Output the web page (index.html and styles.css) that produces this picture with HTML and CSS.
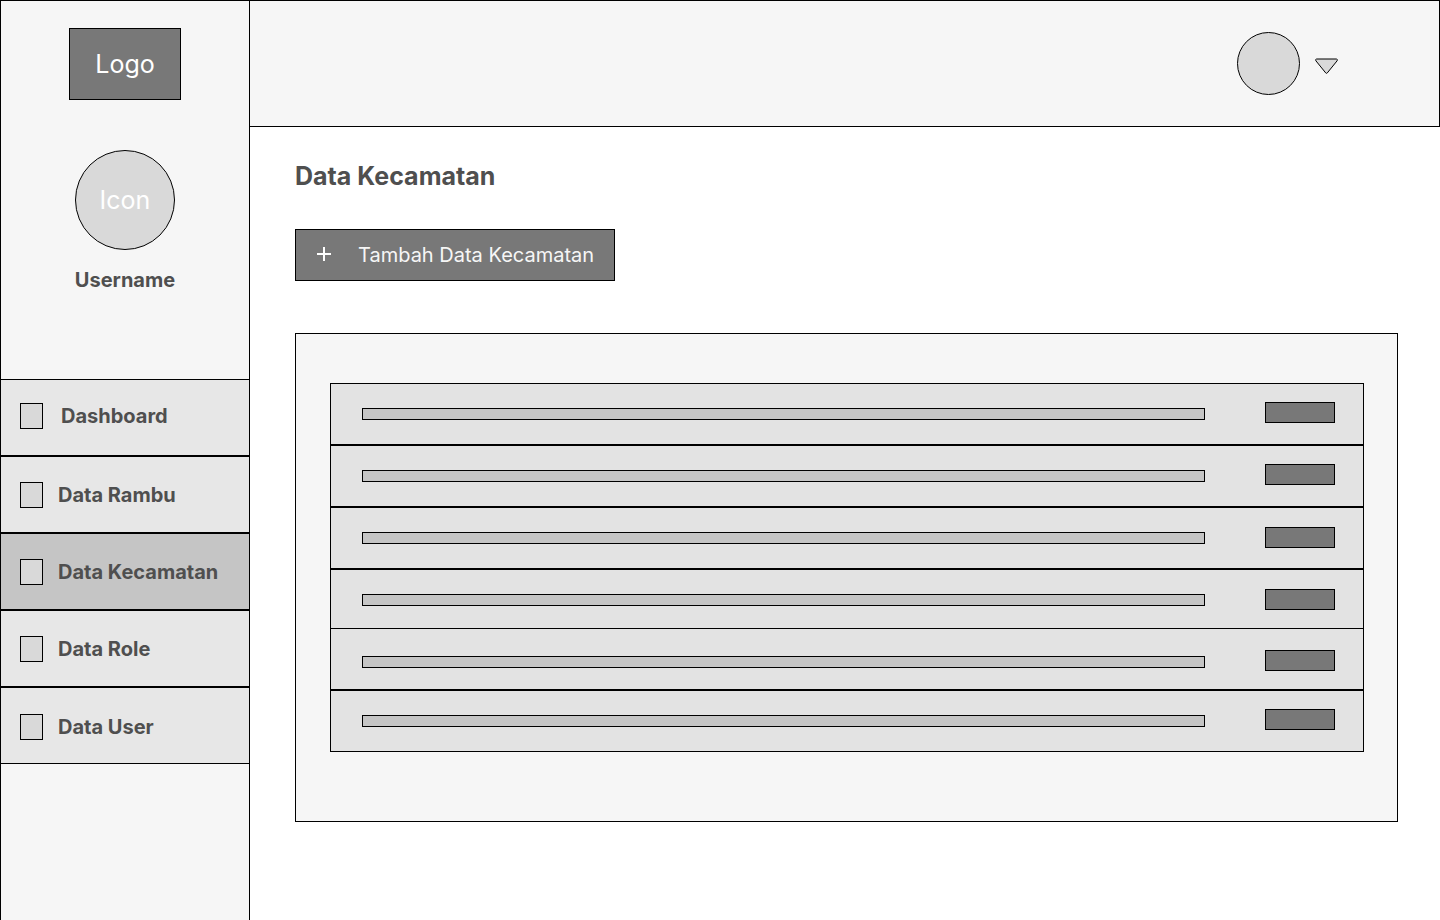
FILE: index.html
```html
<!DOCTYPE html>
<html lang="id">
<head>
<meta charset="utf-8">
<title>Data Kecamatan</title>
<link rel="stylesheet" href="styles.css">
</head>
<body>
<div class="app">
  <aside class="sidebar">
    <div class="logo">Logo</div>
    <div class="avatar">Icon</div>
    <div class="username">Username</div>
    <nav class="menu">
      <a class="menu-item first"><span class="box"></span><span class="label">Dashboard</span></a>
      <a class="menu-item"><span class="box"></span><span class="label">Data Rambu</span></a>
      <a class="menu-item active"><span class="box"></span><span class="label">Data Kecamatan</span></a>
      <a class="menu-item"><span class="box"></span><span class="label">Data Role</span></a>
      <a class="menu-item last"><span class="box"></span><span class="label">Data User</span></a>
    </nav>
  </aside>
  <div class="page">
    <header class="topbar">
      <div class="user"></div>
      <svg class="caret" width="25" height="18" viewBox="0 0 25 18"><path d="M2.6 2H22.4Q24 2.3 23.1 3.8L13.3 15.9Q12.5 16.8 11.7 15.9L1.9 3.8Q1 2.3 2.6 2Z" fill="#d9d9d9" stroke="#000"/></svg>
    </header>
    <main class="content">
      <h1>Data Kecamatan</h1>
      <button class="add">
        <svg width="14" height="14" viewBox="0 0 14 14"><path d="M7 0V14M0 7H14" stroke="#fff" stroke-width="2"/></svg>
        <span>Tambah Data Kecamatan</span>
      </button>
      <section class="panel">
        <div class="row"><span class="bar"></span><span class="action"></span></div>
        <div class="row"><span class="bar"></span><span class="action"></span></div>
        <div class="row lower"><span class="bar"></span><span class="action"></span></div>
        <div class="row lower short"><span class="bar"></span><span class="action"></span></div>
        <div class="row lowest"><span class="bar"></span><span class="action"></span></div>
        <div class="row"><span class="bar"></span><span class="action"></span></div>
      </section>
    </main>
  </div>
</div>
</body>
</html>
```
FILE: styles.css
```css
* { box-sizing: border-box; }
body {
  margin: 0;
  font-family: Inter, "Liberation Sans", sans-serif;
  color: #4f4f4f;
  background: #fff;
}
.app { display: flex; width: 1440px; height: 920px; overflow: hidden; }

.sidebar {
  display: flex;
  flex-direction: column;
  align-items: center;
  flex: none;
  width: 250px;
  padding-top: 27px;
  background: #f6f6f6;
  border: 1px solid #000;
  border-bottom: 0;
}
.logo, .avatar {
  display: flex;
  align-items: center;
  justify-content: center;
  flex: none;
  border: 1px solid #000;
  color: #fff;
  font-size: 25px;
  font-weight: 400;
  line-height: 30px;
}
.logo { width: 112px; height: 72px; background: #787878; }
.avatar {
  width: 100px;
  height: 100px;
  margin-top: 50px;
  border-radius: 50%;
  background: #d9d9d9;
}
.username {
  height: 24px;
  margin-top: 18px;
  font-size: 20px;
  font-weight: 700;
  line-height: 24px;
}
.menu { align-self: stretch; margin-top: 87px; }
.menu-item {
  display: flex;
  align-items: flex-start;
  gap: 15px;
  height: 77px;
  padding: 25px 0 0 19px;
  border: solid #000;
  border-width: 1px 0;
  background: #e7e7e7;
}
.menu-item.first { gap: 18px; padding-top: 23px; }
.menu-item.last { padding-top: 26px; }
.menu-item.active { background: #c5c5c5; }
.box {
  flex: none;
  width: 23px;
  height: 26px;
  border: 1px solid #000;
  background: #d9d9d9;
}
.label { font-size: 20px; font-weight: 700; line-height: 26px; }

.page { flex: 1; }
.topbar {
  display: flex;
  justify-content: flex-end;
  gap: 14px;
  height: 127px;
  padding: 31px 100px 0 0;
  background: #f6f6f6;
  border: 1px solid #000;
  border-left: 0;
}
.user {
  width: 63px;
  height: 63px;
  border: 1px solid #000;
  border-radius: 50%;
  background: #d9d9d9;
}
.caret { margin-top: 25px; }

.content { padding: 34px 42px 0 45px; }
h1 { margin: 0; font-size: 25px; font-weight: 700; line-height: 30px; }
.add {
  display: flex;
  align-items: center;
  gap: 27px;
  width: 320px;
  height: 52px;
  margin: 38px 0 52px;
  padding: 0 0 0 21px;
  border: 1px solid #000;
  background: #787878;
  color: #f6f6f6;
  font: 400 20px/24px Inter, "Liberation Sans", sans-serif;
}
.add svg { margin-bottom: 2px; }

.panel {
  height: 489px;
  padding: 49px 33px 0 34px;
  border: 1px solid #000;
  background: #f6f6f6;
}
.row {
  display: flex;
  align-items: flex-start;
  gap: 60px;
  height: 62px;
  padding: 18px 0 0 31px;
  border: 1px solid #000;
  background: #e3e3e3;
}
.row.short { height: 59px; border-bottom: 0; }
.bar {
  width: 843px;
  height: 12px;
  margin-top: 6px;
  border: 1px solid #000;
  background: #c5c5c5;
}
.action { width: 70px; height: 21px; border: 1px solid #000; background: #787878; }
.lower .action { margin-top: 1px; }
.lowest .action { margin-top: 3px; }
.lowest .bar { margin-top: 9px; }
```
